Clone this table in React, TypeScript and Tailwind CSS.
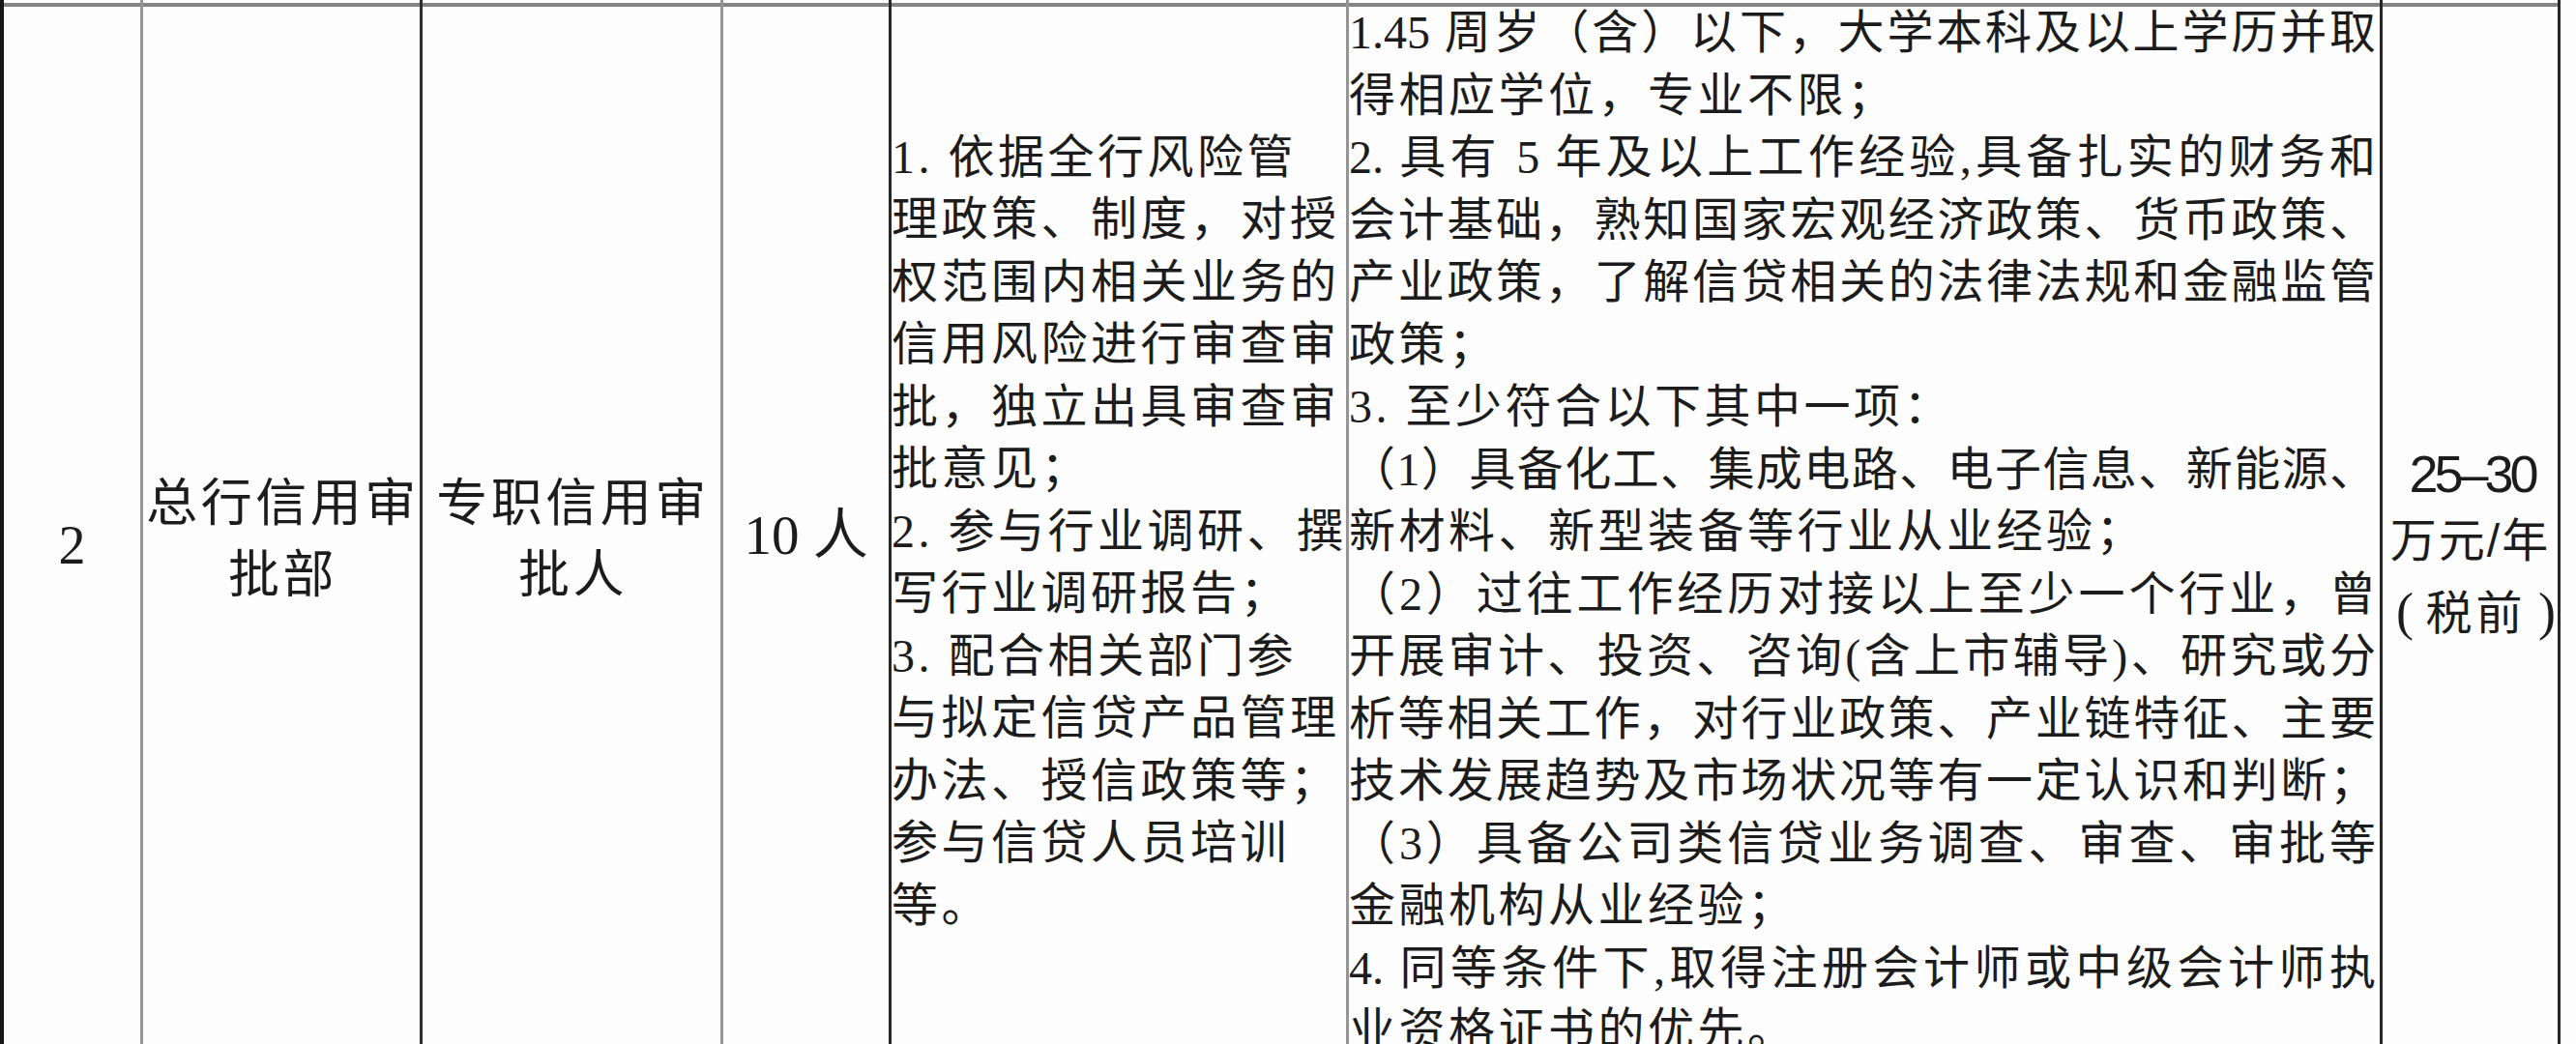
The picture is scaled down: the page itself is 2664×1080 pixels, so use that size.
const serif = "font-['Liberation_Serif','Noto_Sans_CJK_SC',serif]";
const cjk = "font-['Noto_Sans_CJK_SC',sans-serif]";

// [text, justified to the full column width]
const qualifications: [string, boolean][] = [
    ["1.45 周岁（含）以下，大学本科及以上学历并取", true],
    ["得相应学位，专业不限；", false],
    ["2. 具有 5 年及以上工作经验,具备扎实的财务和", true],
    ["会计基础，熟知国家宏观经济政策、货币政策、", true],
    ["产业政策，了解信贷相关的法律法规和金融监管", true],
    ["政策；", false],
    ["3. 至少符合以下其中一项：", false],
    ["（1）具备化工、集成电路、电子信息、新能源、", true],
    ["新材料、新型装备等行业从业经验；", false],
    ["（2）过往工作经历对接以上至少一个行业，曾", true],
    ["开展审计、投资、咨询(含上市辅导)、研究或分", true],
    ["析等相关工作，对行业政策、产业链特征、主要", true],
    ["技术发展趋势及市场状况等有一定认识和判断；", true],
    ["（3）具备公司类信贷业务调查、审查、审批等", true],
    ["金融机构从业经验；", false],
    ["4. 同等条件下,取得注册会计师或中级会计师执", true],
    ["业资格证书的优先。", false],
];

const duties = [
    "1. 依据全行风险管",
    "理政策、制度，对授",
    "权范围内相关业务的",
    "信用风险进行审查审",
    "批，独立出具审查审",
    "批意见；",
    "2. 参与行业调研、撰",
    "写行业调研报告；",
    "3. 配合相关部门参",
    "与拟定信贷产品管理",
    "办法、授信政策等；",
    "参与信贷人员培训",
    "等。",
];

function Cell({ className, center = true, children }: { className: string; center?: boolean; children: React.ReactNode }) {
    return (
        <div className={`flex shrink-0 flex-col border-r-[3px] ${className}`}>
            <div className="h-[3px]" />
            {/* top rule of the row */}
            <div className="h-[4px] bg-[#858585]" />
            <div className={`flex flex-1 flex-col ${center ? "items-center justify-center" : ""}`}>{children}</div>
        </div>
    );
}

function TwoLines({ a, b }: { a: string; b: string }) {
    return (
        <div className={`mb-[6px] pl-[3px] text-center text-[53px] tracking-[3.5px] whitespace-nowrap ${cjk}`}>
            <div className="h-[74px] leading-[74px]">{a}</div>
            <div className="h-[74px] leading-[74px]">{b}</div>
        </div>
    );
}

export default function App() {
    return (
        <div className="h-[1080px] w-[2664px] overflow-hidden bg-[#fdfdfd] text-[#1c1c1c]">
            <div className="flex w-[2648px] border-l-4 border-[#151515]">
                <Cell className="w-[144px] border-[#959595]">
                    <div className={`mt-[17px] text-[56px] leading-none ${serif}`}>2</div>
                </Cell>

                <Cell className="w-[289px] border-[#2e2e2e]">
                    <TwoLines a="总行信用审" b="批部" />
                </Cell>

                <Cell className="w-[311px] border-[#959595]">
                    <TwoLines a="专职信用审" b="批人" />
                </Cell>

                <Cell className="w-[174px] border-[#262626]">
                    <div className={`mb-[5px] text-[57px] leading-none whitespace-nowrap ${serif}`}>10 人</div>
                </Cell>

                <Cell className="w-[473px] border-[#959595]" center={false}>
                    <div className={`flex flex-1 flex-col justify-center text-[48px] tracking-[3.5px] ${serif}`}>
                        {duties.map((line, i) => (
                            <div key={i} className="h-[64.5px] leading-[52px] whitespace-nowrap">
                                {line}
                            </div>
                        ))}
                    </div>
                </Cell>

                <Cell className="w-[1069px] border-[#262626]" center={false}>
                    <div className={`pt-[1px] text-[48px] ${serif}`}>
                        {qualifications.map(([line, full], i) => (
                            <div
                                key={i}
                                className={`h-[64.5px] leading-[52px] whitespace-nowrap ${
                                    full ? "pr-[4px] text-justify tracking-normal [text-align-last:justify]" : "tracking-[3.5px]"
                                }`}
                            >
                                {line}
                            </div>
                        ))}
                    </div>
                </Cell>

                <Cell className="w-[184px] border-[#262626]">
                    <div className="mt-[8px] w-full">
                        <div className="h-[70px] pl-[4px] text-center font-['Liberation_Sans',sans-serif] text-[54px] leading-[70px] tracking-[-4px]">
                            25–30
                        </div>
                        <div className="h-[70px] text-center font-['Liberation_Sans','Noto_Sans_CJK_SC',sans-serif] text-[48px] leading-[70px] tracking-[2px] whitespace-nowrap">
                            万元/年
                        </div>
                        <div className="flex h-[70px] items-baseline justify-between pr-[2px] pl-[14px]">
                            <span className="font-['Liberation_Serif',serif] text-[54px] leading-[70px]">(</span>
                            <span className={`text-[48px] leading-[70px] tracking-[4px] ${cjk}`}>税前</span>
                            <span className="font-['Liberation_Serif',serif] text-[54px] leading-[70px]">)</span>
                        </div>
                    </div>
                </Cell>
            </div>
        </div>
    );
}
